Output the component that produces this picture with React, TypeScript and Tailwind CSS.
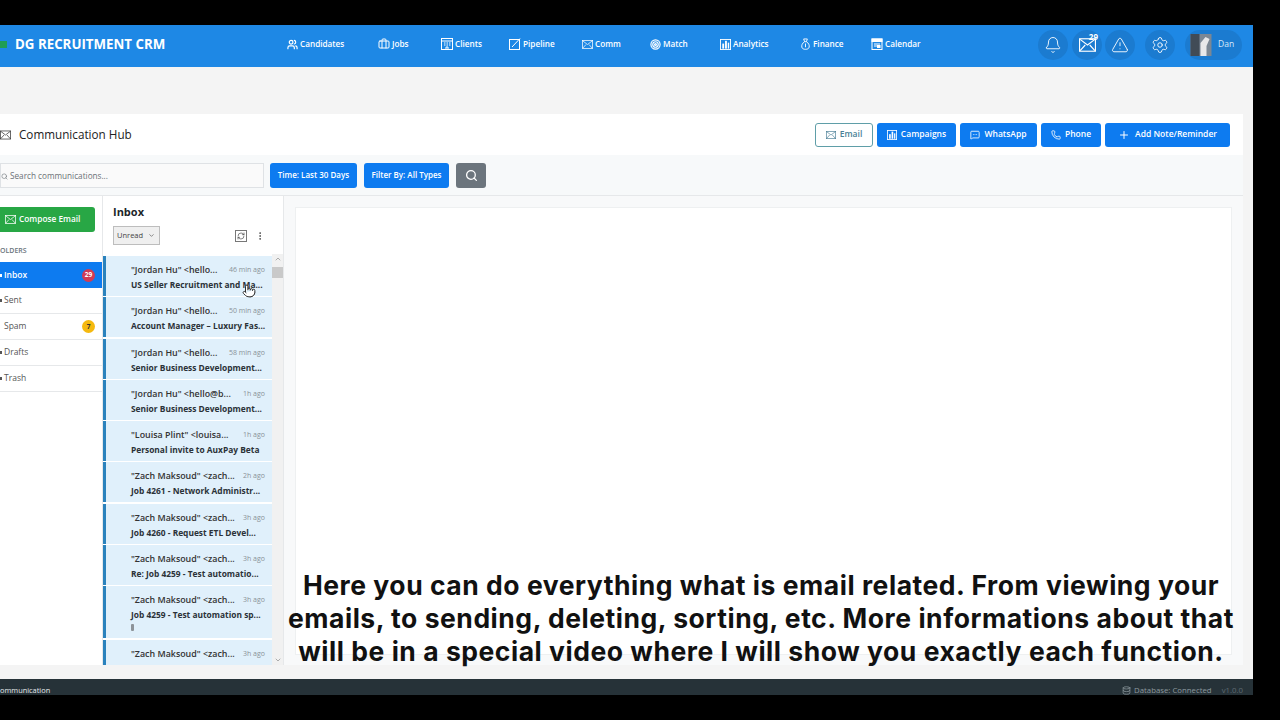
import React from 'react';
import {
  Bell, Briefcase, ChevronDown, ChevronUp, Database, EllipsisVertical,
  MessageSquareMore, Phone, Plus, Pointer, RefreshCw, Search, Settings, Target, TriangleAlert, Users,
} from 'lucide-react';

const UI_FONT = "font-['Open_Sans','Noto_Sans',sans-serif]";

// Small filled chart tile used by Analytics and Campaigns
const ChartTile = ({ size = 11 }: { size?: number }) => (
  <svg width={size} height={size} viewBox="0 0 12 12" fill="none">
    <rect x="0.5" y="0.5" width="11" height="11" stroke="currentColor" />
    <rect x="2.5" y="5" width="2" height="5.5" fill="currentColor" />
    <rect x="5.5" y="2" width="2" height="8.5" fill="currentColor" />
    <rect x="8.5" y="4" width="1.5" height="6.5" fill="currentColor" />
  </svg>
);

const MoneyBag = () => (
  <svg width="11" height="12" viewBox="0 0 12 13" fill="none" stroke="currentColor" strokeWidth="1">
    <path d="M4 1h4L7 4H5L4 1z" />
    <path d="M5 4C2.5 5.5 1.5 8 2 10c.4 1.6 2 2.3 4 2.3s3.6-.7 4-2.3c.5-2-.5-4.5-3-6" />
    <path d="M6 6v4" />
  </svg>
);

const MailImage = ({ size = 13 }: { size?: number }) => (
  <svg width={size} height={Math.round(size * 0.8)} viewBox="0 0 15 12" fill="none" stroke="currentColor" strokeWidth="1">
    <rect x="0.5" y="0.5" width="14" height="11" />
    <path d="M1 1l6.5 5L14 1M1 11l4.5-5M14 11L9.5 6" />
  </svg>
);

const ClientsIcon = () => (
  <svg width="12" height="12" viewBox="0 0 12 12" fill="none" stroke="currentColor" strokeWidth="1">
    <rect x="0.5" y="0.5" width="11" height="11" />
    <path d="M0.5 3h11M3 5h1.5M5.5 5H7M8 5h1.5M3 7h1.5M5.5 7H7M8 7h1.5M5 9h2v2.5H5z" />
  </svg>
);

const PipelineIcon = () => (
  <svg width="12" height="12" viewBox="0 0 12 12" fill="none" stroke="currentColor" strokeWidth="1">
    <rect x="0.5" y="1.5" width="10" height="10" />
    <path d="M3 9l8-8.5" />
  </svg>
);

const CalendarIcon = () => (
  <svg width="12" height="12" viewBox="0 0 12 12" fill="none" stroke="currentColor" strokeWidth="1">
    <rect x="1" y="1" width="10" height="10.5" />
    <rect x="1" y="1" width="10" height="2.5" fill="currentColor" />
    <path d="M3 6h6M3 8h3" />
    <rect x="6.5" y="7.5" width="2.5" height="2" fill="currentColor" />
  </svg>
);

const navItems: { label: string; icon: React.ReactNode; cell: string }[] = [
  { label: 'Candidates', icon: <Users size={11} strokeWidth={2.6} />, cell: 'w-[91px]' },
  { label: 'Jobs', icon: <Briefcase size={12} />, cell: 'w-[63px]' },
  { label: 'Clients', icon: <ClientsIcon />, cell: 'w-[68px]' },
  { label: 'Pipeline', icon: <PipelineIcon />, cell: 'w-[73px]' },
  { label: 'Comm', icon: <MailImage size={11} />, cell: 'w-[68px]' },
  { label: 'Match', icon: <Target size={11} strokeWidth={2.6} />, cell: 'w-[70px]' },
  { label: 'Analytics', icon: <ChartTile />, cell: 'w-[80px]' },
  { label: 'Finance', icon: <MoneyBag />, cell: 'w-[71px]' },
  { label: 'Calendar', icon: <CalendarIcon />, cell: 'w-[60px]' },
];

const folders: { label: string; badge?: string; badgeClass?: string; active?: boolean; mark?: boolean }[] = [
  { label: 'Inbox', badge: '29', badgeClass: 'bg-[#d13b55] text-white', active: true, mark: true },
  { label: 'Sent', mark: true },
  { label: 'Spam', badge: '7', badgeClass: 'bg-[#f5b90f] text-[#333]' },
  { label: 'Drafts', mark: true },
  { label: 'Trash', mark: true },
];

const messages: { from: string; time: string; subject?: string; attach?: boolean }[] = [
  { from: '"Jordan Hu" <hello...', time: '46 min ago', subject: 'US Seller Recruitment and Ma...' },
  { from: '"Jordan Hu" <hello...', time: '50 min ago', subject: 'Account Manager – Luxury Fas...' },
  { from: '"Jordan Hu" <hello...', time: '58 min ago', subject: 'Senior Business Development...' },
  { from: '"Jordan Hu" <hello@b...', time: '1h ago', subject: 'Senior Business Development...' },
  { from: '"Louisa Plint" <louisa...', time: '1h ago', subject: 'Personal invite to AuxPay Beta' },
  { from: '"Zach Maksoud" <zach...', time: '2h ago', subject: 'Job 4261 - Network Administr...' },
  { from: '"Zach Maksoud" <zach...', time: '3h ago', subject: 'Job 4260 - Request ETL Devel...' },
  { from: '"Zach Maksoud" <zach...', time: '3h ago', subject: 'Re: Job 4259 - Test automatio...' },
  { from: '"Zach Maksoud" <zach...', time: '3h ago', subject: 'Job 4259 - Test automation sp...', attach: true },
  { from: '"Zach Maksoud" <zach...', time: '3h ago' },
];

const BlueButton = ({ children, className = '' }: { children: React.ReactNode; className?: string }) => (
  <div className={`h-[24px] flex items-center justify-center gap-[4px] rounded-[3px] bg-[#0d7bf0] text-white text-[8.5px] font-semibold ${className}`}>
    {children}
  </div>
);

const Caption = () => (
  <div className="absolute left-[271px] top-[568.5px] w-[980px] text-center font-['Inter',sans-serif] text-[26.5px] leading-[33.2px] font-bold tracking-[0.53px] text-[#111]">
    <p>Here you can do everything what is email related. From viewing your</p>
    <p>emails, to sending, deleting, sorting, etc. More informations about that</p>
    <p>will be in a special video where I will show you exactly each function.</p>
  </div>
);

const App: React.FC = () => {
  return (
    <div className={`relative h-[720px] w-[1280px] overflow-hidden bg-black pt-[25px] ${UI_FONT}`}>
      <div className="h-[670px] w-[1253px] flex flex-col overflow-hidden bg-[#f4f4f4]">
        {/* Top bar */}
        <header className="h-[42px] shrink-0 flex items-center bg-[#1e88e5] pb-[3px] text-white">
          <div className="w-[7px] h-[7px] bg-[#1f9d55] mr-[8px]" />
          <div className="w-[272px] text-[13.3px] font-bold whitespace-nowrap">DG RECRUITMENT CRM</div>
          <nav className="flex items-center">
            {navItems.map((item) => (
              <div key={item.label} className={`${item.cell} flex items-center gap-[2px] text-[8.2px] font-semibold`}>
                {item.icon}
                <span>{item.label}</span>
              </div>
            ))}
          </nav>
          <div className="ml-auto mr-[11px] flex items-center">
            <div className="w-[30px] h-[30px] rounded-full bg-[#1b7bd0] flex items-center justify-center">
              <Bell size={18} strokeWidth={1.2} />
            </div>
            <div className="relative ml-[4px] w-[30px] h-[30px] rounded-full bg-[#1b7bd0] flex items-center justify-center">
              <MailImage size={17} />
              <span className="absolute right-[4px] top-[2px] text-[8px] leading-[9px] font-bold">29</span>
            </div>
            <div className="ml-[3px] w-[30px] h-[30px] rounded-full bg-[#1b7bd0] flex items-center justify-center">
              <TriangleAlert size={18} strokeWidth={1.2} />
            </div>
            <div className="ml-[10px] w-[30px] h-[30px] rounded-full bg-[#1b7bd0] flex items-center justify-center">
              <Settings size={18} strokeWidth={1.2} />
            </div>
            <div className="ml-[10px] w-[57px] h-[30px] rounded-full bg-[#1b7bd0] flex items-center gap-[6px] pl-[5px]">
              <svg width="22" height="22" viewBox="0 0 21 22">
                <rect width="21" height="22" fill="#7b8794" />
                <rect width="9" height="22" fill="#414b56" />
                <path d="M10 22V9l5-6 4 2-3 7v10z" fill="#e8e8ea" />
              </svg>
              <span className="text-[8.5px] text-[#d8e9f8]">Dan</span>
            </div>
          </div>
        </header>

        <div className="h-[47px] shrink-0" />

        {/* Main card */}
        <main className="h-[551px] shrink-0 mr-[10px] flex flex-col overflow-hidden bg-white">
          <div className="h-[41px] shrink-0 flex items-center">
            <div className="w-[11px] text-[#333] flex items-center overflow-hidden">
              <MailImage size={12} />
            </div>
            <h1 className="ml-[8px] text-[11.7px] font-medium text-[#222]">Communication Hub</h1>
            <div className="ml-auto mr-[13px] flex items-center gap-[4px]">
              <div className="h-[24px] w-[58px] flex items-center justify-center gap-[4px] rounded-[3px] border border-[#5f9ea8] text-[8.5px] font-semibold text-[#4a7f96]">
                <MailImage size={10} />
                Email
              </div>
              <BlueButton className="w-[79px]"><ChartTile size={10} />Campaigns</BlueButton>
              <BlueButton className="w-[77px]"><MessageSquareMore size={10} />WhatsApp</BlueButton>
              <BlueButton className="w-[60px]"><Phone size={10} />Phone</BlueButton>
              <BlueButton className="w-[125px] gap-[5px]"><Plus size={12} />Add Note/Reminder</BlueButton>
            </div>
          </div>

          <div className="h-[41px] shrink-0 flex items-center gap-[7px] bg-[#f7f9fa] border-b border-[#e6e8ea]">
            <div className="h-[25px] w-[264px] -mr-[1px] flex items-center gap-[2px] border border-[#dfe2e5] bg-[#fafafa] pt-[2px] text-[8.2px] text-[#6b7177]">
              <Search size={7} />
              Search communications...
            </div>
            <BlueButton className="w-[87px] h-[25px] text-[8px] font-normal">Time: Last 30 Days</BlueButton>
            <BlueButton className="w-[85px] h-[25px] text-[8px] font-normal">Filter By: All Types</BlueButton>
            <div className="w-[30px] h-[25px] rounded-[3px] bg-[#6c757d] text-white flex items-center justify-center">
              <Search size={13} strokeWidth={2.4} />
            </div>
          </div>

          <div className="flex-1 flex min-h-0">
            {/* Folders */}
            <aside className="w-[103px] shrink-0 border-r border-[#e6e8ea]">
              <div className="pt-[11px] pr-[7px]">
                <div className="h-[25px] flex items-center gap-[3px] rounded-r-[3px] bg-[#28a745] pl-[5px] text-white text-[8.3px] font-semibold">
                  <MailImage size={11} />
                  Compose Email
                </div>
              </div>
              <div className="mt-[14px] h-[16px] text-[7px] font-semibold text-[#6c757d]">OLDERS</div>
              {folders.map((f) => (
                <div
                  key={f.label}
                  className={`h-[26px] pr-[7px] flex items-center justify-between text-[8.5px] ${
                    f.active ? 'bg-[#0d7bf0] text-white font-semibold' : 'border-b border-[#e6e8ea] text-[#555]'
                  }`}
                >
                  <span className="flex items-center gap-[2px]">
                    <span className={`w-[2px] h-[3px] ${f.mark ? 'bg-current' : ''}`} />
                    {f.label}
                  </span>
                  {f.badge && (
                    <span className={`w-[13px] h-[13px] rounded-full flex items-center justify-center text-[6.5px] font-bold ${f.badgeClass}`}>
                      {f.badge}
                    </span>
                  )}
                </div>
              ))}
            </aside>

            {/* Message list */}
            <section className="w-[181px] shrink-0 flex flex-col min-h-0 border-r border-[#e6e8ea]">
              <div className="h-[58px] shrink-0 pl-[10px] pr-[18px] pt-[8px]">
                <div className="text-[11px] leading-[15px] font-bold text-[#212529]">Inbox</div>
                <div className="mt-[7px] flex items-center justify-between">
                  <div className="w-[47px] h-[19px] flex items-center justify-between border border-[#bdbdbd] bg-[#efefef] pl-[3px] pr-[4px] text-[7.5px] text-[#444]">
                    Unread
                    <ChevronDown size={7} />
                  </div>
                  <div className="flex items-center gap-[8px] text-[#444]">
                    <div className="w-[12px] h-[12px] border border-[#777] flex items-center justify-center">
                      <RefreshCw size={8} />
                    </div>
                    <EllipsisVertical size={10} />
                  </div>
                </div>
              </div>
              <div className="flex-1 flex min-h-0 overflow-hidden">
                <div className="flex-1 min-w-0 pt-[2px]">
                  {messages.map((m, i) => (
                    <div
                      key={i}
                      className="mb-[1.3px] border-l-[3px] border-[#2a82bd] bg-[#e0f0fb] pl-[25px] pr-[7px] pt-[6px] pb-[4px] text-[8.4px] leading-[15px]"
                    >
                      <div className="flex items-center justify-between">
                        <span className="text-[8.9px] font-semibold text-[#333] whitespace-nowrap">{m.from}</span>
                        <span className="text-[7px] text-[#8a9299] whitespace-nowrap">{m.time}</span>
                      </div>
                      {m.subject && <div className="font-bold text-[#2b3238] whitespace-nowrap">{m.subject}</div>}
                      {m.attach && <div className="mt-[2px] mb-[3px] w-[3px] h-[7px] rounded-[1px] bg-[#8d9399]" />}
                    </div>
                  ))}
                </div>
                <div className="w-[11px] shrink-0 flex flex-col items-center bg-[#f1f1f1] text-[#888]">
                  <ChevronUp size={8} className="mt-[1px]" />
                  <div className="mt-[4px] w-full h-[11px] bg-[#c9c9c9]" />
                  <ChevronDown size={8} className="mt-auto mb-[1px]" />
                </div>
              </div>
            </section>

            {/* Preview pane */}
            <section className="flex-1 min-w-0 bg-[#f8f9fa] px-[11px] pt-[11px] pb-[10px]">
              <div className="h-full border border-[#eef0f1] bg-white" />
            </section>
          </div>
        </main>

        <div className="h-[14px] shrink-0" />

        {/* Status bar */}
        <footer className="h-[16px] shrink-0 flex items-end justify-between bg-[#263238] pr-[10px] text-[7.8px] leading-[10px] text-[#8d999f]">
          <span className="text-[7.4px] text-[#e4e8ea]">ommunication</span>
          <div className="flex items-center gap-[3px]">
            <Database size={9} />
            <span>Database: Connected</span>
            <span className="ml-[7px] text-[#5f6b72]">v1.0.0</span>
          </div>
        </footer>
      </div>
      {/* Mouse pointer caught in the recording */}
      <Pointer size={14} strokeWidth={1.6} className="absolute left-[242px] top-[284px] fill-white text-[#222]" />
      <Caption />
    </div>
  );
};

export default App;
